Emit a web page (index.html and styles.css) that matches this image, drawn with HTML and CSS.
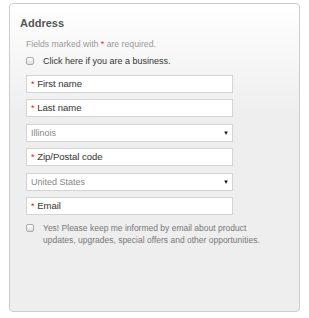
FILE: index.html
```html
<!DOCTYPE html>
<html lang="en">
<head>
    <meta charset="UTF-8">
    <meta name="viewport" content="width=device-width, initial-scale=1.0">
    <title>Address</title>
    <link rel="stylesheet" href="styles.css">
</head>
<body>
    <div class="panel">
        <h2>Address</h2>
        <div class="form">
            <p class="note">Fields marked with <span class="req">*</span> are required.</p>
            <label class="check">
                <span class="box"></span>
                <span>Click here if you are a business.</span>
            </label>

            <div class="field"><span class="req">*</span> First name</div>
            <div class="field"><span class="req">*</span> Last name</div>
            <div class="field select">Illinois<span class="arrow">&#9660;</span></div>
            <div class="field"><span class="req">*</span> Zip/Postal code</div>
            <div class="field select">United States<span class="arrow">&#9660;</span></div>
            <div class="field"><span class="req">*</span> Email</div>

            <label class="check optin">
                <span class="box"></span>
                <span>Yes! Please keep me informed by email about product updates, upgrades, special offers and other opportunities.</span>
            </label>
        </div>
    </div>
</body>
</html>
```

FILE: styles.css
```css
* {
    box-sizing: border-box;
    margin: 0;
    padding: 0;
}

body {
    margin: 3px 9px 6px 9px;
    font-family: 'Liberation Sans', Arial, sans-serif;
    background: #fff;
}

.panel {
    height: 309px;
    border: 1px solid #ccc;
    border-radius: 4px;
    background: linear-gradient(#fff 0, #eee 110px, #eee 100%);
    padding: 13px 10px;
}

h2 {
    font-size: 11px;
    line-height: 13px;
    font-weight: bold;
    color: #555;
}

.form {
    padding-left: 6px;
}

.note {
    margin-top: 9px;
    font-size: 8.7px;
    line-height: 11px;
    color: #999;
}

.req {
    color: #d22;
}

.check {
    display: flex;
    align-items: flex-start;
    gap: 9px;
    margin-top: 5px;
    margin-bottom: 8px;
    font-size: 9px;
    line-height: 12px;
    color: #333;
}

.box {
    flex: none;
    width: 8px;
    height: 8px;
    margin-top: 2px;
    border: 1px solid #aaa;
    border-radius: 2px;
    background: linear-gradient(#fff, #ddd);
}

.field {
    position: relative;
    width: 207px;
    height: 18px;
    margin-bottom: 6.4px;
    padding-left: 4px;
    border: 1px solid #d4d4d4;
    background: #fff;
    font-size: 9.5px;
    line-height: 16px;
    color: #444;
    -webkit-text-stroke: 0.1px #444;
}

.field .req {
    font-size: 9px;
    -webkit-text-stroke: 0;
}

.select {
    font-size: 9px;
    color: #888;
    -webkit-text-stroke: 0;
}

.arrow {
    position: absolute;
    right: 3px;
    top: 0;
    font-size: 6px;
    color: #111;
}

.optin {
    margin-top: 7px;
    width: 250px;
    font-size: 8.5px;
    color: #777;
}
```
